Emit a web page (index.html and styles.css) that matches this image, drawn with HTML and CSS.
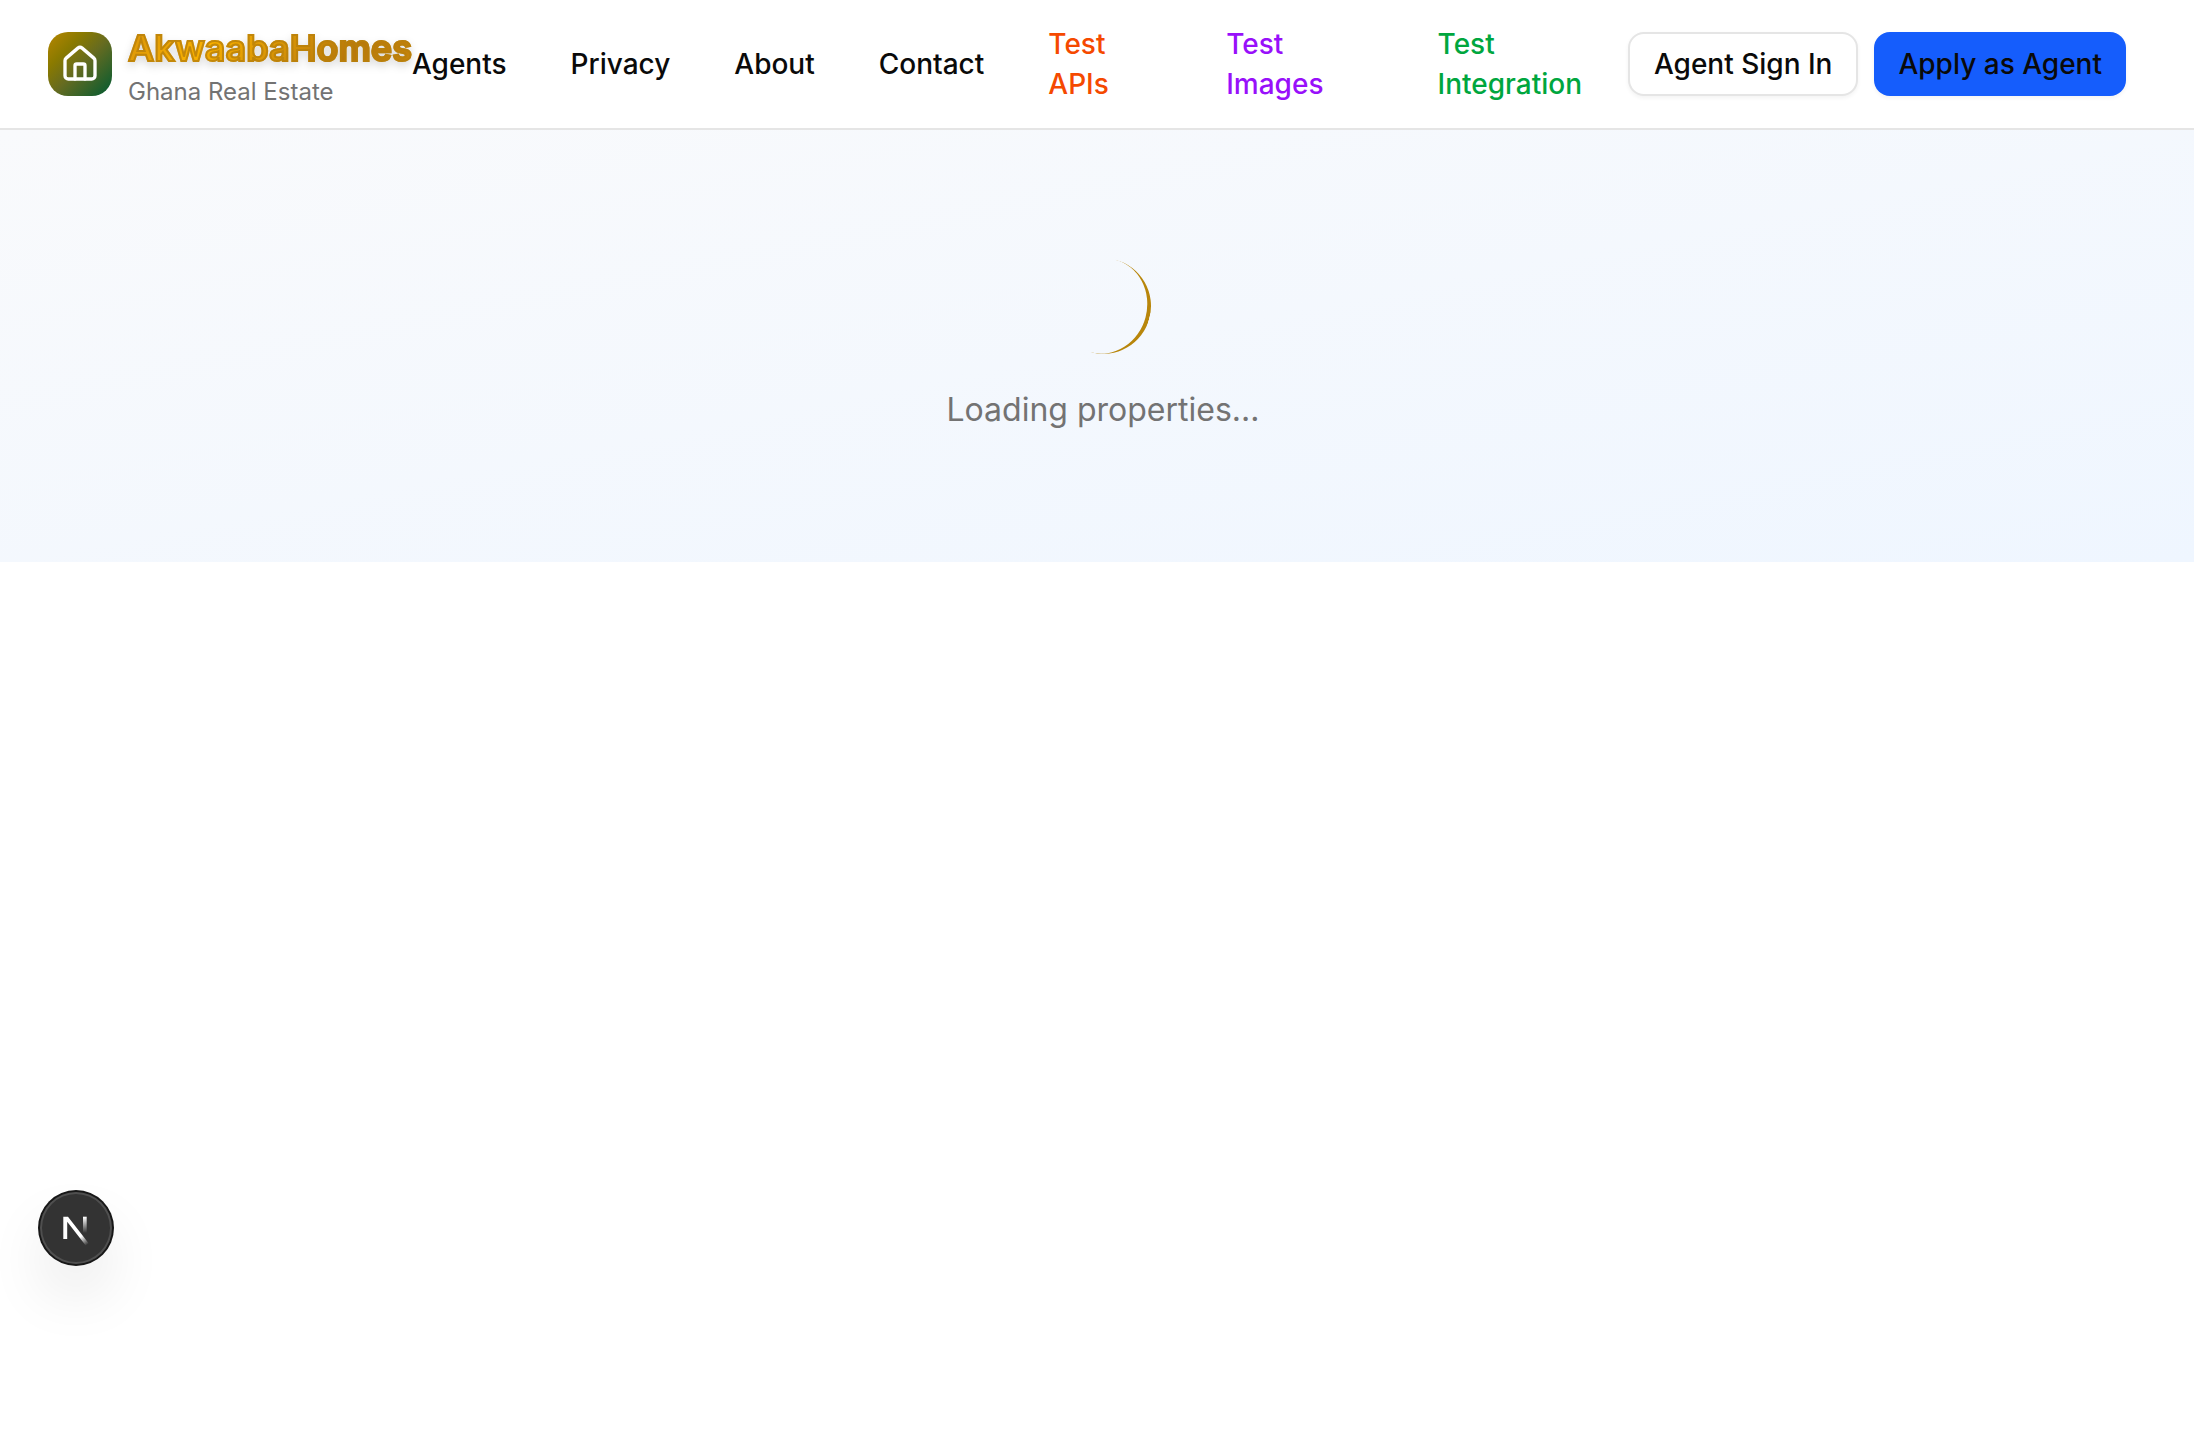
FILE: index.html
```html
<!DOCTYPE html>
<html lang="en">
<head>
  <meta charset="utf-8">
  <meta name="viewport" content="width=device-width, initial-scale=1">
  <title>AkwaabaHomes</title>
  <link rel="stylesheet" href="styles.css">
</head>
<body>
  <header class="header">
    <a class="brand" href="#">
      <span class="brand-mark">
        <svg class="brand-icon" viewBox="0 0 24 24" aria-hidden="true">
          <path d="M15 21v-8a1 1 0 0 0-1-1h-4a1 1 0 0 0-1 1v8"/>
          <path d="M3 10a2 2 0 0 1 .709-1.528l7-5.999a2 2 0 0 1 2.582 0l7 5.999A2 2 0 0 1 21 10v9a2 2 0 0 1-2 2H5a2 2 0 0 1-2-2z"/>
        </svg>
      </span>
      <span class="brand-text">
        <span class="brand-name">AkwaabaHomes</span>
        <span class="brand-tagline">Ghana Real Estate</span>
      </span>
    </a>
    <nav class="nav" aria-label="Main">
      <a class="nav-link" href="#">Agents</a>
      <a class="nav-link" href="#">Privacy</a>
      <a class="nav-link" href="#">About</a>
      <a class="nav-link" href="#">Contact</a>
      <a class="nav-link nav-link-orange" href="#">Test APIs</a>
      <a class="nav-link nav-link-purple" href="#">Test Images</a>
      <a class="nav-link nav-link-green" href="#">Test Integration</a>
    </nav>
    <div class="actions">
      <button class="button button-outline" type="button">Agent Sign In</button>
      <button class="button button-primary" type="button">Apply as Agent</button>
    </div>
  </header>

  <main class="hero">
    <div class="spinner"></div>
    <p class="loading" role="status">Loading properties...</p>
  </main>

  <button class="dev-badge" type="button" aria-label="Open developer tools">
    <svg class="dev-icon" viewBox="0 0 72 72" aria-hidden="true">
      <defs>
        <linearGradient id="diagonal-fade" gradientUnits="userSpaceOnUse" x1="38" y1="41" x2="47" y2="53">
          <stop offset="0" stop-color="#fff"/>
          <stop offset="0.3" stop-color="#fff"/>
          <stop offset="1" stop-color="#fff" stop-opacity="0"/>
        </linearGradient>
        <linearGradient id="stem-fade" gradientUnits="userSpaceOnUse" x1="0" y1="25" x2="0" y2="41">
          <stop offset="0" stop-color="#fff"/>
          <stop offset="1" stop-color="#fff" stop-opacity="0"/>
        </linearGradient>
      </defs>
      <path d="M23.3 24.7h4.7L48.8 51.4 45.7 53.4 27.2 29.8V47h-3.9z" fill="url(#diagonal-fade)"/>
      <path d="M43 24.7h3.7V47H43z" fill="url(#stem-fade)"/>
    </svg>
  </button>
</body>
</html>
```
FILE: styles.css
```css
* {
  box-sizing: border-box;
}

body {
  margin: 0;
  background: #fff;
  color: #0a0a0a;
  font-family: Inter, "Liberation Sans", sans-serif;
  font-size: 28px;
  line-height: 40px;
}

.header {
  display: flex;
  align-items: center;
  justify-content: space-between;
  min-height: 130px;
  padding: 0 68px 0 48px;
  border-bottom: 2px solid #e5e5e5;
}

.brand {
  display: flex;
  flex-shrink: 0;
  align-items: center;
  gap: 16px;
  color: inherit;
  text-decoration: none;
}

.brand-mark {
  display: flex;
  align-items: center;
  justify-content: center;
  width: 64px;
  height: 64px;
  border-radius: 20px;
  background: linear-gradient(to bottom right, #b88600, #8a7a00 28%, #666b20 52%, #005a32);
}

.brand-icon {
  width: 40px;
  height: 40px;
  fill: none;
  stroke: #fff;
  stroke-width: 2;
  stroke-linecap: round;
  stroke-linejoin: round;
}

.brand-text {
  display: flex;
  flex-direction: column;
}

.brand-name {
  background: linear-gradient(135deg, #d4900a 0%, #f8b000 30%, #b8780b 75%, #c8860b 100%);
  background-clip: text;
  color: transparent;
  font-size: 36px;
  font-weight: 600;
  line-height: 56px;
  -webkit-text-stroke: 2px rgba(184, 128, 11, 0.8);
  filter: drop-shadow(0 4px 4px rgba(0, 0, 0, 0.15));
}

.brand-tagline {
  color: #737373;
  font-size: 24px;
  line-height: 32px;
}

.nav {
  display: flex;
  align-items: center;
  gap: 64px;
  min-width: 0;
}

.nav-link {
  color: inherit;
  font-weight: 500;
  text-decoration: none;
}

.nav-link-orange {
  color: #f54900;
}

.nav-link-purple {
  color: #9810fa;
}

.nav-link-green {
  color: #00a63e;
}

.actions {
  display: flex;
  flex-shrink: 0;
  gap: 16px;
}

.button {
  height: 64px;
  padding: 0 24px;
  border: 0;
  border-radius: 16px;
  color: inherit;
  font: inherit;
  font-weight: 500;
  white-space: nowrap;
  box-shadow: 0 2px 4px rgba(0, 0, 0, 0.05);
}

.button-outline {
  border: 2px solid #e5e5e5;
  background: #fff;
}

.button-primary {
  background: #155dfc;
}

.hero {
  display: flex;
  flex-direction: column;
  align-items: center;
  gap: 32px;
  padding: 128px 0 128px 12px;
  background: linear-gradient(to bottom right, #f9fafc, #eff6ff);
}

.spinner {
  width: 96px;
  height: 96px;
  border-bottom: 4px solid #b8860b;
  border-radius: 50%;
  transform: rotate(-75deg);
}

.loading {
  margin: 0;
  color: #737373;
  font-size: 32px;
  line-height: 48px;
}

.dev-badge {
  position: fixed;
  bottom: 170px;
  left: 40px;
  width: 72px;
  height: 72px;
  padding: 0;
  border: 0;
  border-radius: 50%;
  background: #333;
  box-shadow:
    0 0 0 2px #171717,
    inset 0 0 0 2px rgba(255, 255, 255, 0.14),
    0 32px 64px -8px rgba(0, 0, 0, 0.14);
}

.dev-icon {
  display: block;
  width: 72px;
  height: 72px;
}
```
